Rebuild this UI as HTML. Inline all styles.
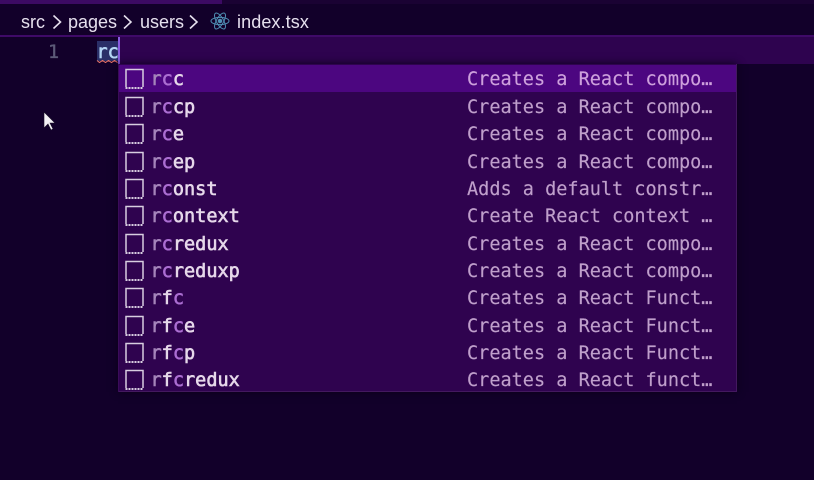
<!DOCTYPE html>
<html><head><meta charset="utf-8">
<style>
html,body{margin:0;padding:0;width:814px;height:480px;overflow:hidden;background:#12002a}
body{position:relative;font-family:"DejaVu Sans Mono","Liberation Mono",monospace}
.a{position:absolute}
.crumb{position:absolute;top:11px;font:18px/22px "Liberation Sans",sans-serif;color:#e6e0ee;white-space:nowrap}
.row{position:absolute;left:120px;width:615px;height:27px}
.row svg{position:absolute;left:4px;top:3px}
.l,.d{position:absolute;top:1px;font-size:18.55px;line-height:27px;white-space:pre}
.l{left:30.500px;color:#e6d8ea;-webkit-text-stroke:.6px currentColor}
.l b{font-weight:normal;color:#ab6ed2}
.l i{font-style:normal;color:#a585bb}
.d{left:347px;color:#bf9fcb;-webkit-text-stroke:.15px currentColor}
.row.sel .d{color:#cda0dc}
</style></head><body>
<div class="a" style="left:0;top:0;width:222px;height:4px;background:#3c0a63"></div>
<div class="a" style="left:222px;top:0;width:592px;height:4px;background:#1a0233"></div>
<div class="crumb" style="left:21px">src</div>
<div class="crumb" style="left:68px">pages</div>
<div class="crumb" style="left:140px">users</div>
<div class="crumb" style="left:237px;letter-spacing:.1px">index.tsx</div>
<svg class="a" style="left:0;top:10px" width="210" height="24" fill="none" stroke="#e6e0ee" stroke-width="1.6"><path d="M53.500 5.500l7 6.500-7 6.500M124 5.500l7 6.500-7 6.500M190 5.500l7 6.500-7 6.500"/></svg>
<svg class="a" style="left:210px;top:11px" width="20" height="20" viewBox="0 0 20 20" fill="none" stroke="#4f8fb4" stroke-width="1"><ellipse cx="10" cy="10" rx="9" ry="3.6"/><ellipse cx="10" cy="10" rx="9" ry="3.6" transform="rotate(60 10 10)"/><ellipse cx="10" cy="10" rx="9" ry="3.6" transform="rotate(120 10 10)"/><circle cx="10" cy="10" r="1.8" fill="#4f8fb4"/></svg>

<div class="a" style="left:0;top:35px;width:814px;height:2px;background:#3f0a68"></div>
<div class="a" style="left:0;top:37px;width:118px;height:27px;background:#12002a"></div>
<div class="a" style="left:118px;top:37px;width:696px;height:27px;background:#2e034f"></div>
<div class="a" style="left:48px;top:39px;font-size:18.55px;line-height:27px;color:#5c5a78;-webkit-text-stroke:.3px currentColor">1</div>
<div class="a" style="left:97px;top:41px;width:21px;height:20px;background:#2a2f68"></div>
<div class="a" style="left:96.500px;top:39px;font-size:18.55px;line-height:27px;color:#b5d6f5;-webkit-text-stroke:.6px currentColor">rc</div>
<svg class="a" style="left:96px;top:59px" width="23" height="5" fill="none" stroke="#f0786a" stroke-width="1"><path d="M1 1.500l2.500 2 3-2 3 2 3-2 3 2 3-2 3 2"/></svg>
<div class="a" style="left:118px;top:37px;width:2px;height:27px;background:#8a5ce0"></div>

<div class="a" style="left:118px;top:64px;width:619px;height:328px;background:#2f034f;box-shadow:0 0 8px #0a0018"></div>
<div class="a" style="left:736px;top:64px;width:1px;height:328px;background:#43195f"></div>
<div class="a" style="left:118px;top:391px;width:619px;height:1px;background:#43195f"></div>
<div class="a" style="left:118px;top:64px;width:1px;height:328px;background:#3a0c5a"></div>
<div class="a" style="left:119px;top:65px;width:617px;height:27px;background:#4c0680"></div>

<div class="row sel" style="top:65px"><svg width="21" height="22" fill="none" stroke="#d8cde0" stroke-width="1.5"><path d="M2 19V1.500h17V19"/><path d="M1.500 20h18" stroke-width="2" stroke-dasharray="2 1"/></svg><div class="l"><i>r</i><b>c</b>c</div><div class="d">Creates a React compo…</div></div>
<div class="row" style="top:93px"><svg width="21" height="22" fill="none" stroke="#d8cde0" stroke-width="1.5"><path d="M2 19V1.500h17V19"/><path d="M1.500 20h18" stroke-width="2" stroke-dasharray="2 1"/></svg><div class="l"><i>r</i><b>c</b>cp</div><div class="d">Creates a React compo…</div></div>
<div class="row" style="top:120px"><svg width="21" height="22" fill="none" stroke="#d8cde0" stroke-width="1.5"><path d="M2 19V1.500h17V19"/><path d="M1.500 20h18" stroke-width="2" stroke-dasharray="2 1"/></svg><div class="l"><i>r</i><b>c</b>e</div><div class="d">Creates a React compo…</div></div>
<div class="row" style="top:148px"><svg width="21" height="22" fill="none" stroke="#d8cde0" stroke-width="1.5"><path d="M2 19V1.500h17V19"/><path d="M1.500 20h18" stroke-width="2" stroke-dasharray="2 1"/></svg><div class="l"><i>r</i><b>c</b>ep</div><div class="d">Creates a React compo…</div></div>
<div class="row" style="top:175px"><svg width="21" height="22" fill="none" stroke="#d8cde0" stroke-width="1.5"><path d="M2 19V1.500h17V19"/><path d="M1.500 20h18" stroke-width="2" stroke-dasharray="2 1"/></svg><div class="l"><i>r</i><b>c</b>onst</div><div class="d">Adds a default constr…</div></div>
<div class="row" style="top:202px"><svg width="21" height="22" fill="none" stroke="#d8cde0" stroke-width="1.5"><path d="M2 19V1.500h17V19"/><path d="M1.500 20h18" stroke-width="2" stroke-dasharray="2 1"/></svg><div class="l"><i>r</i><b>c</b>ontext</div><div class="d">Create React context …</div></div>
<div class="row" style="top:230px"><svg width="21" height="22" fill="none" stroke="#d8cde0" stroke-width="1.5"><path d="M2 19V1.500h17V19"/><path d="M1.500 20h18" stroke-width="2" stroke-dasharray="2 1"/></svg><div class="l"><i>r</i><b>c</b>redux</div><div class="d">Creates a React compo…</div></div>
<div class="row" style="top:257px"><svg width="21" height="22" fill="none" stroke="#d8cde0" stroke-width="1.5"><path d="M2 19V1.500h17V19"/><path d="M1.500 20h18" stroke-width="2" stroke-dasharray="2 1"/></svg><div class="l"><i>r</i><b>c</b>reduxp</div><div class="d">Creates a React compo…</div></div>
<div class="row" style="top:284px"><svg width="21" height="22" fill="none" stroke="#d8cde0" stroke-width="1.5"><path d="M2 19V1.500h17V19"/><path d="M1.500 20h18" stroke-width="2" stroke-dasharray="2 1"/></svg><div class="l"><i>r</i>f<b>c</b></div><div class="d">Creates a React Funct…</div></div>
<div class="row" style="top:312px"><svg width="21" height="22" fill="none" stroke="#d8cde0" stroke-width="1.5"><path d="M2 19V1.500h17V19"/><path d="M1.500 20h18" stroke-width="2" stroke-dasharray="2 1"/></svg><div class="l"><i>r</i>f<b>c</b>e</div><div class="d">Creates a React Funct…</div></div>
<div class="row" style="top:339px"><svg width="21" height="22" fill="none" stroke="#d8cde0" stroke-width="1.5"><path d="M2 19V1.500h17V19"/><path d="M1.500 20h18" stroke-width="2" stroke-dasharray="2 1"/></svg><div class="l"><i>r</i>f<b>c</b>p</div><div class="d">Creates a React Funct…</div></div>
<div class="row" style="top:366px"><svg width="21" height="22" fill="none" stroke="#d8cde0" stroke-width="1.5"><path d="M2 19V1.500h17V19"/><path d="M1.500 20h18" stroke-width="2" stroke-dasharray="2 1"/></svg><div class="l"><i>r</i>f<b>c</b>redux</div><div class="d">Creates a React funct…</div></div>

<svg class="a" style="left:42px;top:110px" width="14" height="22"><path d="M2 2v16l4-4 3 6 2-1-3-6h5z" fill="#f4f2f6" stroke="#1a1028" stroke-width=".6"/></svg>
</body></html>
